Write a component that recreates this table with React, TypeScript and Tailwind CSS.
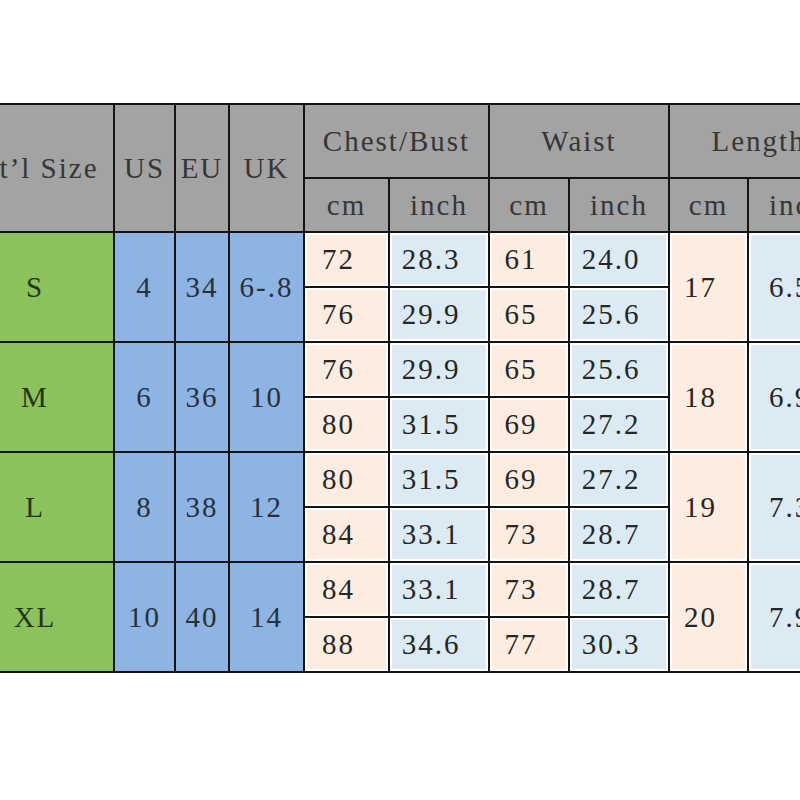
import React from "react";

// ── Size chart data ─────────────────────────────────────────────
type SizeRow = {
  label: string;
  us: string;
  eu: string;
  uk: string;
  chest: [string, string][];
  waist: [string, string][];
  length: [string, string];
};

const rows: SizeRow[] = [
  { label: "S", us: "4", eu: "34", uk: "6-.8", chest: [["72", "28.3"], ["76", "29.9"]], waist: [["61", "24.0"], ["65", "25.6"]], length: ["17", "6.5"] },
  { label: "M", us: "6", eu: "36", uk: "10", chest: [["76", "29.9"], ["80", "31.5"]], waist: [["65", "25.6"], ["69", "27.2"]], length: ["18", "6.9"] },
  { label: "L", us: "8", eu: "38", uk: "12", chest: [["80", "31.5"], ["84", "33.1"]], waist: [["69", "27.2"], ["73", "28.7"]], length: ["19", "7.3"] },
  { label: "XL", us: "10", eu: "40", uk: "14", chest: [["84", "33.1"], ["88", "34.6"]], waist: [["73", "28.7"], ["77", "30.3"]], length: ["20", "7.9"] },
];

// Spaced-out serif glyphs, like the scanned chart
function T({ children }: { children: React.ReactNode }) {
  return <span className="inline-block whitespace-pre tracking-[2px]">{children}</span>;
}

const cell = "border-2 border-[#141414] p-0 text-center align-middle";
const grey = `${cell} bg-[#a3a3a3] text-[#363636] font-normal`;
const green = `${cell} bg-[#8cc25c] text-[#26361c]`;
const blue = `${cell} bg-[#8db4e2] text-[#28303c]`;
const peach = `${cell} bg-[#fdede1] text-[#262626] pr-4 shadow-[inset_0_0_0_2px_#fff]`;
const ice = `${cell} bg-[#dcebf3] text-[#262626] pr-4 shadow-[inset_0_0_0_2px_#fff]`;

export default function App() {
  return (
    <div className="w-[800px] h-[800px] overflow-hidden bg-white pt-[103px]">
      <table
        className="ml-[-45px] w-[892px] border-collapse table-fixed text-[29px] leading-none"
        style={{ fontFamily: '"Liberation Serif", "DejaVu Serif", serif' }}
      >
        <colgroup>
          <col className="w-[158px]" />
          <col className="w-[61px]" />
          <col className="w-[54px]" />
          <col className="w-[75px]" />
          <col className="w-[85px]" />
          <col className="w-[100px]" />
          <col className="w-[80px]" />
          <col className="w-[100px]" />
          <col className="w-[79px]" />
          <col className="w-[100px]" />
        </colgroup>
        <thead>
          <tr className="h-[74px]">
            <th rowSpan={2} className={grey}><T>Int’l Size</T></th>
            <th rowSpan={2} className={grey}><T>US</T></th>
            <th rowSpan={2} className={grey}><T>EU</T></th>
            <th rowSpan={2} className={grey}><T>UK</T></th>
            <th colSpan={2} className={grey}><T>Chest/Bust</T></th>
            <th colSpan={2} className={grey}><T>Waist</T></th>
            <th colSpan={2} className={grey}><T>Length</T></th>
          </tr>
          <tr className="h-[54px]">
            {["cm", "inch", "cm", "inch", "cm", "inch"].map((u, i) => (
              <th key={i} className={grey}><T>{u}</T></th>
            ))}
          </tr>
        </thead>
        <tbody>
          {rows.map((r) =>
            [0, 1].map((k) => (
              <tr key={`${r.label}-${k}`} className="h-[55px]">
                {k === 0 && (
                  <>
                    <td rowSpan={2} className={green}><T>{r.label}</T></td>
                    <td rowSpan={2} className={blue}><T>{r.us}</T></td>
                    <td rowSpan={2} className={blue}><T>{r.eu}</T></td>
                    <td rowSpan={2} className={blue}><T>{r.uk}</T></td>
                  </>
                )}
                <td className={peach}><T>{r.chest[k][0]}</T></td>
                <td className={ice}><T>{r.chest[k][1]}</T></td>
                <td className={peach}><T>{r.waist[k][0]}</T></td>
                <td className={ice}><T>{r.waist[k][1]}</T></td>
                {k === 0 && (
                  <>
                    <td rowSpan={2} className={peach}><T>{r.length[0]}</T></td>
                    <td rowSpan={2} className={ice}><T>{r.length[1]}</T></td>
                  </>
                )}
              </tr>
            ))
          )}
        </tbody>
      </table>
    </div>
  );
}
